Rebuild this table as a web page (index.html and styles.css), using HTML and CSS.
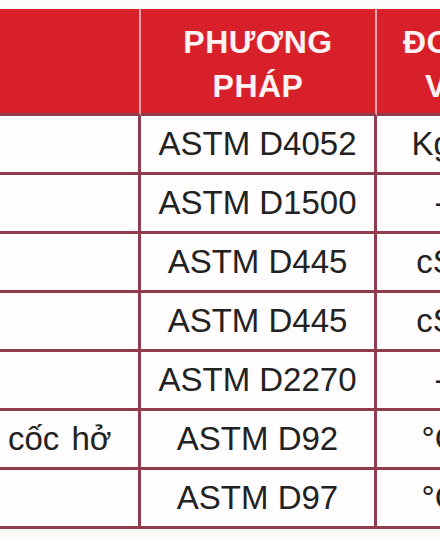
FILE: index.html
```html
<!DOCTYPE html>
<html lang="vi">
<head>
<meta charset="utf-8">
<title>Chỉ tiêu kỹ thuật</title>
<link rel="stylesheet" href="styles.css">
</head>
<body>
<div class="frame">
  <table class="spec">
    <colgroup>
      <col class="c-name">
      <col class="c-method">
      <col class="c-unit">
      <col class="c-result">
    </colgroup>
    <thead>
      <tr>
        <th>CHỈ TIÊU</th>
        <th>PHƯƠNG<br>PHÁP</th>
        <th>ĐƠN<br>VỊ</th>
        <th>KẾT<br>QUẢ</th>
      </tr>
    </thead>
    <tbody>
      <tr><td class="name">Tỷ trọng 15°C</td><td>ASTM D4052</td><td>Kg/l</td><td>0,87</td></tr>
      <tr><td class="name">Màu ASTM</td><td>ASTM D1500</td><td>-</td><td>L2.0</td></tr>
      <tr><td class="name">Độ nhớt 40°C</td><td>ASTM D445</td><td>cSt</td><td>100</td></tr>
      <tr><td class="name">Độ nhớt 100°C</td><td>ASTM D445</td><td>cSt</td><td>11,2</td></tr>
      <tr><td class="name">Chỉ số độ nhớt</td><td>ASTM D2270</td><td>-</td><td>97</td></tr>
      <tr><td class="name">Nhiệt độ chớp cháy cốc hở</td><td>ASTM D92</td><td>°C</td><td>230</td></tr>
      <tr><td class="name">Điểm rót chảy</td><td>ASTM D97</td><td>°C</td><td>-12</td></tr>
    </tbody>
  </table>
</div>
</body>
</html>
```
FILE: styles.css
```css
html, body {
  margin: 0;
  padding: 0;
  background: #fdfafa;
  overflow: hidden;
}

.frame {
  width: 440px;
  height: 540px;
  overflow: hidden;
  padding-top: 9px;
  box-sizing: border-box;
}

.spec {
  margin-left: -300px;
  border-collapse: separate;
  border-spacing: 0;
  table-layout: fixed;
  width: 1000px;
  font-family: "Liberation Sans", Arial, sans-serif;
}

.c-name { width: 441px; }
.c-method { width: 236px; }
.c-unit { width: 129px; }
.c-result { width: 194px; }

.spec th {
  background: #d8202b;
  color: #fff2f2;
  font-size: 32px;
  font-weight: bold;
  letter-spacing: 0.5px;
  line-height: 44px;
  height: 107px;
  padding: 6px 0 0;
  box-sizing: border-box;
  text-align: center;
  vertical-align: middle;
  border-right: 2px solid #f0a3a8;
  border-bottom: 3px solid #8e3c4e;
}

.spec td {
  background: #fffdfd;
  color: #222222;
  font-size: 33px;
  height: 59px;
  padding: 0;
  box-sizing: border-box;
  text-align: center;
  vertical-align: middle;
  white-space: nowrap;
  border-right: 3px solid #8e3c4e;
  border-bottom: 3px solid #8e3c4e;
}

.spec td.name {
  text-align: left;
  padding-left: 1px;
  word-spacing: 3px;
}
```
